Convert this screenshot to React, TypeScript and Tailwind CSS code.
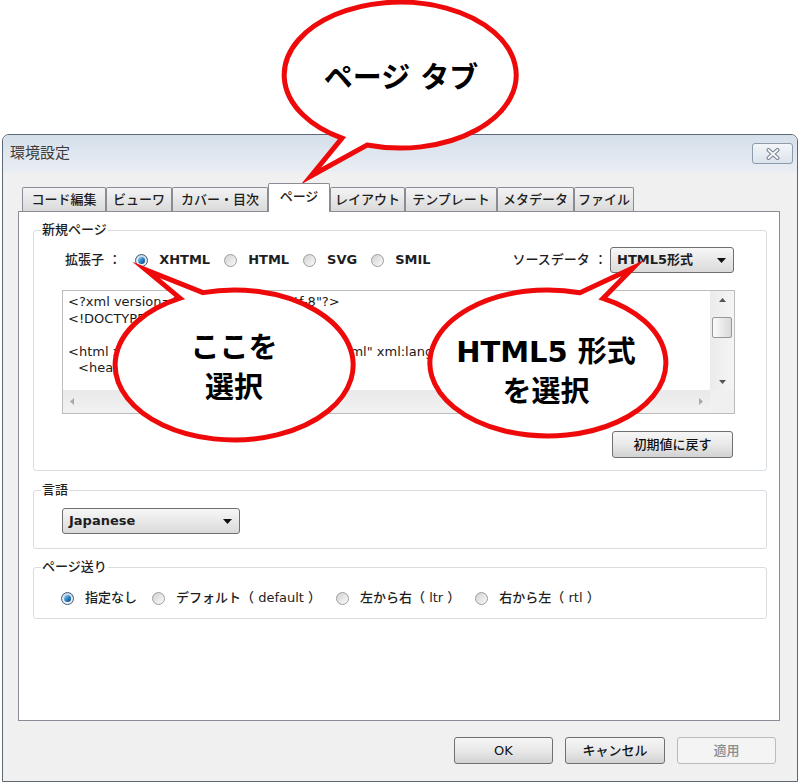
import type { ReactNode } from 'react';

const UI_FONT = "font-['DejaVu_Sans','Noto_Sans_CJK_JP',sans-serif]";

const TABS = [
  { label: 'コード編集', w: 'w-[84px]' },
  { label: 'ビューワ', w: 'w-[66px]' },
  { label: 'カバー・目次', w: 'w-[96px]' },
  { label: 'ページ', w: 'w-[62px]', active: true },
  { label: 'レイアウト', w: 'w-[75px]' },
  { label: 'テンプレート', w: 'w-[92px]' },
  { label: 'メタデータ', w: 'w-[77px]' },
  { label: 'ファイル', w: 'w-[60px]' },
];

function Radio({ checked = false }: { checked?: boolean }) {
  return (
    <span
      className={
        checked
          ? 'flex h-[13px] w-[13px] shrink-0 items-center justify-center rounded-full border border-[#3d5a77] bg-linear-to-b from-[#c9d6e2] to-[#f4f7fa]'
          : 'flex h-[13px] w-[13px] shrink-0 items-center justify-center rounded-full border border-[#9a9da1] bg-linear-to-br from-[#d2d2d2] to-[#fafafa]'
      }
    >
      {checked && (
        <span className="h-[7px] w-[7px] rounded-full bg-linear-to-br from-[#9bd7fb] via-[#2d86c8] to-[#0d3f6d]" />
      )}
    </span>
  );
}

function RadioItem({ label, checked, bold }: { label: string; checked?: boolean; bold?: boolean }) {
  return (
    <span className="flex items-center">
      <Radio checked={checked} />
      <span className={bold ? 'ml-[11px] font-bold' : 'ml-[11px]'}>{label}</span>
    </span>
  );
}

function Combo({ label, className = '' }: { label: string; className?: string }) {
  return (
    <div
      className={`flex h-[26px] items-center justify-between rounded-[3px] border border-[#707070] bg-linear-to-b from-[#f7f7f7] to-[#dadada] pl-[6px] pr-[7px] font-bold ${className}`}
    >
      <span>{label}</span>
      <svg width="9" height="5" viewBox="0 0 9 5">
        <path d="M0 0h9L4.5 5z" fill="#111" />
      </svg>
    </div>
  );
}

function Button({
  children,
  className = '',
  disabled = false,
}: {
  children: ReactNode;
  className?: string;
  disabled?: boolean;
}) {
  return (
    <div
      className={
        disabled
          ? `flex h-[27px] items-center justify-center rounded-[3px] border border-[#b8bcc0] bg-[#f4f4f4] text-[#8d8d8d] ${className}`
          : `flex h-[27px] items-center justify-center rounded-[3px] border border-[#707070] bg-linear-to-b from-[#f6f6f6] via-[#e9e9e9] to-[#d2d2d2] text-[#111] ${className}`
      }
    >
      {children}
    </div>
  );
}

function Group({ legend, children, className = '' }: { legend: string; children: ReactNode; className?: string }) {
  return (
    <fieldset className={`mx-0 rounded-[3px] border border-[#d8dde2] ${className}`}>
      <legend className="ml-[7px] px-[1px] text-[13px] leading-[18px] text-[#1e1e1e]">{legend}</legend>
      {children}
    </fieldset>
  );
}

function Arrow({ dir, color = '#555' }: { dir: 'up' | 'down' | 'left' | 'right'; color?: string }) {
  const d = {
    up: 'M0 4h7L3.5 0z',
    down: 'M0 0h7L3.5 4z',
    left: 'M4 0v7L0 3.5z',
    right: 'M0 0v7L4 3.5z',
  }[dir];
  const vertical = dir === 'up' || dir === 'down';
  return (
    <svg width={vertical ? 7 : 4} height={vertical ? 4 : 7} viewBox={vertical ? '0 0 7 4' : '0 0 4 7'}>
      <path d={d} fill={color} />
    </svg>
  );
}

function SourceBox() {
  return (
    <div className="mt-[17px] flex h-[124px] w-[673px] flex-col border border-[#bcbcbc] bg-white">
      <div className="flex min-h-0 flex-1">
        <div className="min-w-0 flex-1 overflow-hidden whitespace-pre pl-[5px] pt-[3px] text-[13px] font-normal leading-[16.5px] text-[#1a1a1a]">
          <div>{'<?xml version="1.0" encoding="utf-8"?>'}</div>
          <div>{'<!DOCTYPE html>'}</div>
          <div>&nbsp;</div>
          <div>{'<html xmlns="http://www.w3.org/1999/xhtml" xml:lang="ja">'}</div>
          <div className="pl-[10px]">{'<head>'}</div>
        </div>
        <div className="flex w-[24px] flex-col bg-linear-to-r from-[#ebebeb] to-[#f5f5f5]">
          <div className="flex h-[17px] items-center justify-center">
            <Arrow dir="up" />
          </div>
          <div className="flex-1 px-[2px] pt-[9px]">
            <div className="h-[21px] rounded-[2px] border border-[#979797] bg-linear-to-r from-[#fbfbfb] to-[#d9d9d9]" />
          </div>
          <div className="flex h-[17px] items-center justify-center">
            <Arrow dir="down" />
          </div>
        </div>
      </div>
      <div className="flex h-[23px]">
        <div className="flex flex-1 items-center justify-between bg-linear-to-b from-[#e9e9e9] to-[#f2f2f2] px-[7px]">
          <Arrow dir="left" color="#a8a8a8" />
          <Arrow dir="right" color="#a8a8a8" />
        </div>
        <div className="w-[24px] bg-[#f0f0f0]" />
      </div>
    </div>
  );
}

function Balloons() {
  return (
    <>
      <svg
        className="pointer-events-none absolute left-0 top-0"
        width="800"
        height="783"
        viewBox="0 0 800 783"
      >
        <g fill="#fff" stroke="#ee0a0a" strokeWidth="5" strokeLinejoin="miter" strokeMiterlimit="12">
          <path d="M342 138.2 A116 73 0 1 1 367 145 L311 176 Z" />
          <path d="M180 298.2 A119 75 0 1 0 203 292.6 L146 270 Z" />
          <path d="M580 292.7 A118 73 0 1 0 603 298.4 L633 268 Z" />
        </g>
      </svg>
      <div className="pointer-events-none absolute left-[283px] top-[58px] w-[236px] text-center text-[29px] font-bold leading-[40px] text-black">
        ページ タブ
      </div>
      <div className="pointer-events-none absolute left-[115px] top-[328px] w-[238px] text-center text-[29px] font-bold leading-[40px] text-black">
        ここを
        <br />
        選択
      </div>
      <div className="pointer-events-none absolute left-[428px] top-[332px] w-[236px] text-center text-[29px] font-bold leading-[40px] text-black">
        HTML5 形式
        <br />
        を選択
      </div>
    </>
  );
}

export default function App() {
  return (
    <div className={`relative h-[783px] w-[800px] overflow-hidden bg-white ${UI_FONT}`}>
      <div className="px-[2px] pt-[134px]">
        <div className="flex h-[648px] flex-col overflow-hidden rounded-t-[7px] border border-[#5d6874] bg-[#f0f0f0]">
          {/* title bar */}
          <div className="flex h-[37px] shrink-0 items-center justify-between bg-linear-to-b from-[#d5dfea] to-[#e9eef4] pl-[7px] pr-[4px]">
            <span className="text-[15px] text-[#3b3b3b]">環境設定</span>
            <div className="flex h-[21px] w-[41px] items-center justify-center rounded-[3px] border border-[#8d9bab] bg-linear-to-b from-[#f3f6f9] to-[#dbe3ec]">
              <svg width="14" height="12" viewBox="0 0 14 12">
                <path d="M2.5 2 L11.5 10 M11.5 2 L2.5 10" stroke="#7b8591" strokeWidth="4" strokeLinecap="round" />
                <path d="M2.5 2 L11.5 10 M11.5 2 L2.5 10" stroke="#f7f9fb" strokeWidth="1.8" strokeLinecap="round" />
              </svg>
            </div>
          </div>

          {/* client */}
          <div className="flex flex-1 flex-col text-[13px] font-medium text-[#1e1e1e]">
            <div className="mt-[11px] flex h-[28px] items-end pl-[19px]">
              {TABS.map((t) =>
                t.active ? (
                  <div
                    key={t.label}
                    className={`relative z-10 -mb-px flex h-[29px] items-center justify-center rounded-t-[2px] border border-b-0 border-[#898c95] bg-white pb-[2px] ${t.w}`}
                  >
                    {t.label}
                  </div>
                ) : (
                  <div
                    key={t.label}
                    className={`flex h-[24px] items-center justify-center rounded-t-[2px] border border-b-0 border-[#898c95] bg-linear-to-b from-[#f4f4f4] to-[#dadada] ${t.w}`}
                  >
                    {t.label}
                  </div>
                ),
              )}
            </div>

            <div className="ml-[15px] h-[510px] w-[762px] border border-[#898c95] bg-white pl-[14px] pr-[12px]">
              <Group legend="新規ページ" className="mt-[9px]">
                <div className="pb-[12px] pl-[28px] pr-[31px]">
                  <div className="mt-[8px] flex h-[26px] items-center justify-between">
                    <div className="ml-[3px] flex items-center gap-[14px]">
                      <span>拡張子 ：</span>
                      <RadioItem label="XHTML" checked bold />
                      <RadioItem label="HTML" bold />
                      <RadioItem label="SVG" bold />
                      <RadioItem label="SMIL" bold />
                    </div>
                    <div className="flex items-center">
                      <span>ソースデータ ：</span>
                      <Combo label="HTML5形式" className="ml-[3px] mr-[1px] w-[124px]" />
                    </div>
                  </div>
                  <SourceBox />
                  <div className="mt-[17px] flex justify-end pr-[2px]">
                    <Button className="w-[121px]">初期値に戻す</Button>
                  </div>
                </div>
              </Group>

              <Group legend="言語" className="mt-[10px]">
                <div className="pb-[14px] pl-[28px]">
                  <Combo label="Japanese" className="mt-[9px] w-[178px]" />
                </div>
              </Group>

              <Group legend="ページ送り" className="mt-[9px]">
                <div className="mt-[12px] flex h-[20px] items-center gap-[15px] pl-[27px]">
                  <RadioItem label="指定なし" checked />
                  <RadioItem label="デフォルト（ default ）" />
                  <RadioItem label="左から右（ ltr ）" />
                  <RadioItem label="右から左（ rtl ）" />
                </div>
                <div className="h-[10px]" />
              </Group>
            </div>

            <div className="mt-[16px] flex justify-end gap-[12px] pr-[21px]">
              <Button className="w-[99px]">OK</Button>
              <Button className="w-[100px]">キャンセル</Button>
              <Button className="w-[99px]" disabled>
                適用
              </Button>
            </div>
          </div>
        </div>
      </div>
      <Balloons />
    </div>
  );
}
